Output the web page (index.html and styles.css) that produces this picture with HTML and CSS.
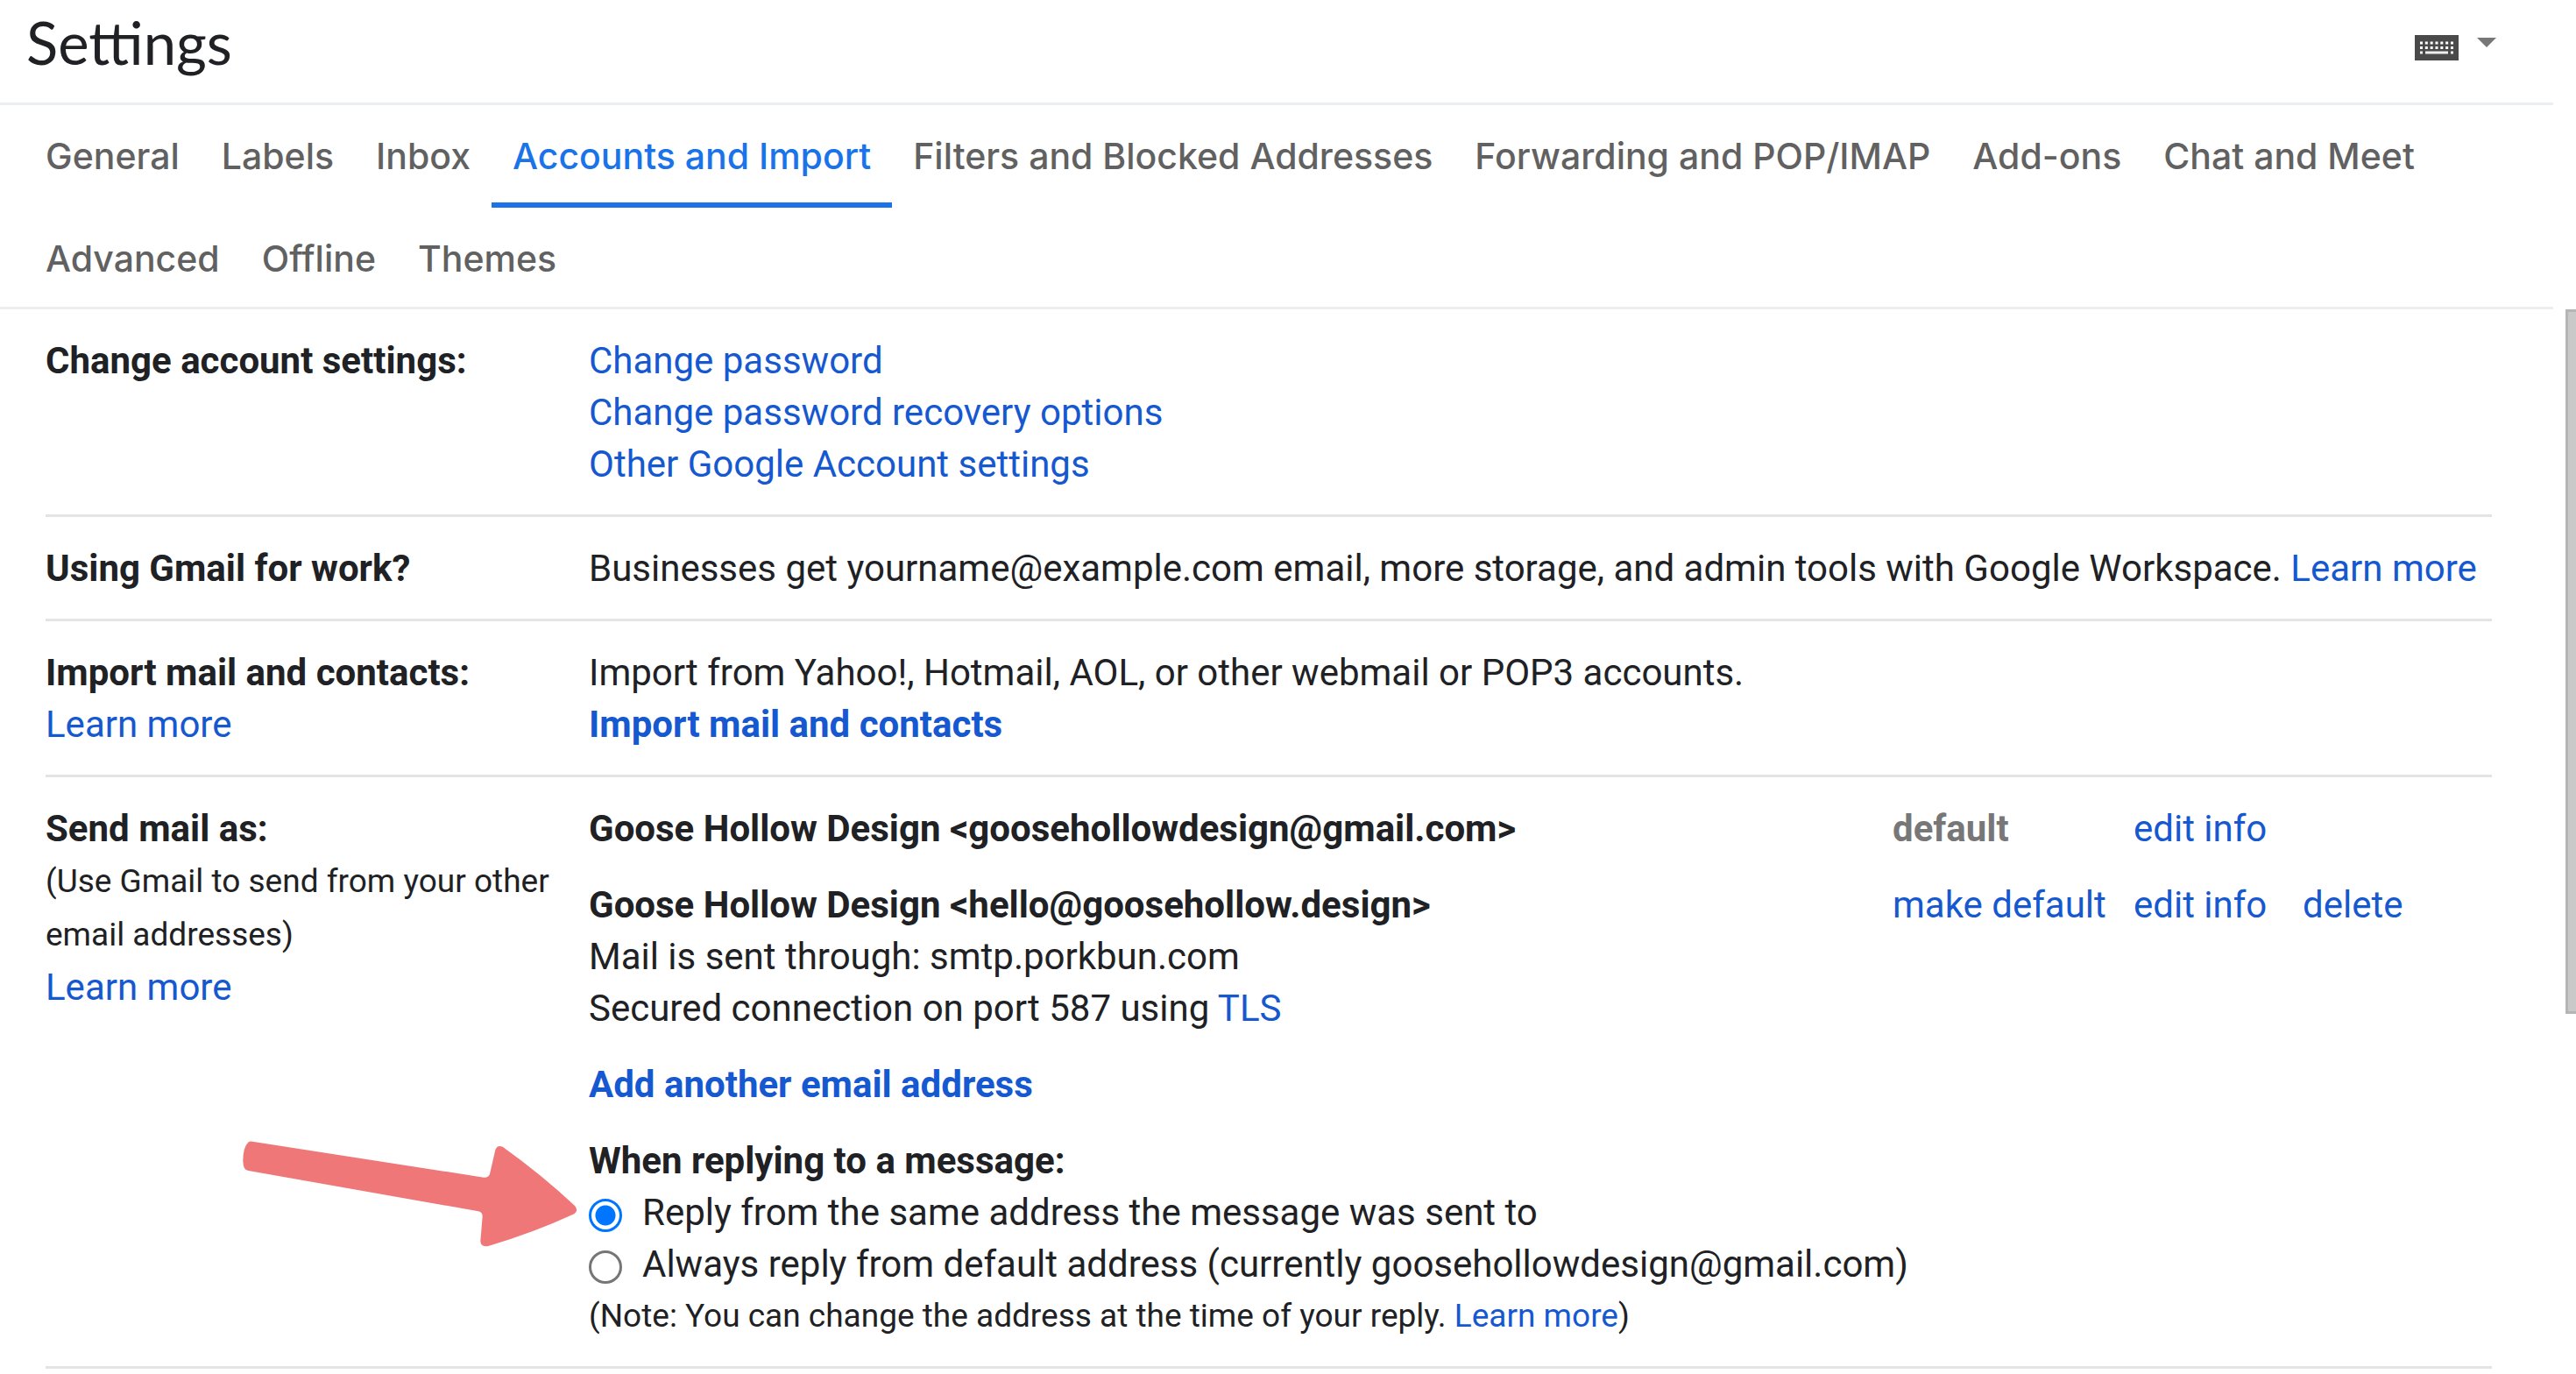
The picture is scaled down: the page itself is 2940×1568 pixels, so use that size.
FILE: index.html
```html
<!DOCTYPE html>
<html lang="en">
<head>
    <meta charset="UTF-8">
    <meta name="viewport" content="width=device-width, initial-scale=1.0">
    <title>Settings</title>
    <link rel="stylesheet" href="styles.css">
</head>
<body>

    <header class="topbar">
        <h1>Settings</h1>
        <button class="input-tools" type="button" aria-label="Input tools">
            <svg width="50" height="29" viewBox="0 0 50 29">
                <rect width="50" height="29" fill="#4a4a4a"/>
                <path d="M6 9h38M6 14.5h38" stroke="#fff" stroke-width="3" stroke-dasharray="3 2.83"/>
                <path d="M6 20h3M12 20h26M41 20h3" stroke="#eee" stroke-width="3"/>
            </svg>
            <svg class="caret" width="22" height="11" viewBox="0 0 22 11">
                <path d="M0 0h22L11 11z" fill="#777"/>
            </svg>
        </button>
    </header>

    <nav class="tabs">
        <a href="#">General</a>
        <a href="#">Labels</a>
        <a href="#">Inbox</a>
        <a href="#" class="active">Accounts and Import</a>
        <a href="#">Filters and Blocked Addresses</a>
        <a href="#">Forwarding and POP/IMAP</a>
        <a href="#">Add-ons</a>
        <a href="#">Chat and Meet</a>
        <a href="#">Advanced</a>
        <a href="#">Offline</a>
        <a href="#">Themes</a>
    </nav>

    <div class="scroll-area">
        <main class="settings">

            <section class="row">
                <h2>Change account settings:</h2>
                <div>
                    <p><a href="#">Change password</a></p>
                    <p><a href="#">Change password recovery options</a></p>
                    <p><a href="#">Other Google Account settings</a></p>
                </div>
            </section>

            <section class="row">
                <h2>Using Gmail for work?</h2>
                <p>Businesses get yourname@example.com email, more storage, and admin tools with Google Workspace. <a href="#">Learn more</a></p>
            </section>

            <section class="row">
                <div>
                    <h2>Import mail and contacts:</h2>
                    <p><a href="#">Learn more</a></p>
                </div>
                <div>
                    <p>Import from Yahoo!, Hotmail, AOL, or other webmail or POP3 accounts.</p>
                    <p><a href="#" class="strong">Import mail and contacts</a></p>
                </div>
            </section>

            <section class="row">
                <div>
                    <h2>Send mail as:</h2>
                    <p class="hint">(Use Gmail to send from your other email addresses)</p>
                    <p><a href="#">Learn more</a></p>
                </div>
                <div class="groups">
                    <div class="address">
                        <p class="strong">Goose Hollow Design &lt;goosehollowdesign@gmail.com&gt;</p>
                        <span class="default">default</span>
                        <a href="#">edit info</a>
                    </div>
                    <div class="address">
                        <div>
                            <p class="strong">Goose Hollow Design &lt;hello@goosehollow.design&gt;</p>
                            <p>Mail is sent through: smtp.porkbun.com</p>
                            <p>Secured connection on port 587 using <a href="#">TLS</a></p>
                        </div>
                        <a href="#">make default</a>
                        <a href="#">edit info</a>
                        <a href="#">delete</a>
                    </div>
                    <p><a href="#" class="strong">Add another email address</a></p>
                    <div class="reply">
                        <svg class="arrow" width="382" height="121" viewBox="111 99 1146 363">
                            <path fill="#ef7778" d="M144 101L936 224Q952 226 957 212L976 130Q982 112 1001 119Q1138 217 1248 321Q1262 337 1246 349Q1108 413 952 459Q926 464 925 442L932 358Q932 343 918 340L131 201Q113 201 112 168Q112 121 131 103Q137 99 144 101z"/>
                        </svg>
                        <p class="strong">When replying to a message:</p>
                        <label><input type="radio" name="reply" checked>Reply from the same address the message was sent to</label>
                        <label><input type="radio" name="reply">Always reply from default address (currently goosehollowdesign@gmail.com)</label>
                        <p class="note">(Note: You can change the address at the time of your reply. <a href="#">Learn more</a>)</p>
                    </div>
                </div>
            </section>

        </main>
        <div class="scrollbar"><div class="thumb"></div></div>
    </div>

</body>
</html>
```

FILE: styles.css
```css
* {
    box-sizing: border-box;
}

body {
    margin: 0;
    background-color: #fff;
    color: #202124;
    font-family: Roboto, "Liberation Sans", sans-serif;
    font-size: 42px;
    line-height: 59px;
    overflow: hidden;
}

h1, h2, p {
    margin: 0;
}

h2 {
    font-size: 42px;
    font-weight: 700;
}

a {
    color: #1558d0;
    text-decoration: none;
}

.strong {
    font-weight: 700;
}

.topbar {
    display: flex;
    justify-content: space-between;
    align-items: flex-start;
    height: 120px;
    margin-right: 26px;
    padding: 8px 65px 0 30px;
    border-bottom: 3px solid #eceff1;
}

.topbar h1 {
    font-family: Lato, sans-serif;
    font-size: 67px;
    font-weight: 400;
    line-height: 80px;
}

.input-tools {
    display: flex;
    align-items: flex-start;
    gap: 21px;
    margin-top: 32px;
    padding: 0;
    border: 0;
    background: none;
}

.caret {
    margin-top: 3px;
}

.tabs {
    display: flex;
    flex-wrap: wrap;
    height: 233px;
    margin-right: 26px;
    padding: 0 28px;
    border-bottom: 3px solid #eee;
}

.tabs a {
    height: 117px;
    padding: 0 24px;
    color: #616161;
    font-family: "Google Sans", Inter, sans-serif;
    font-size: 41px;
    font-weight: 500;
    line-height: 117px;
}

.tabs .active {
    color: #1a73e8;
    border-bottom: 6px solid #1a73e8;
}

.scroll-area {
    display: flex;
}

.settings {
    flex: 1;
    padding: 0 84px 0 52px;
}

.row {
    display: grid;
    grid-template-columns: 620px 1fr;
    padding: 29px 0 28px;
    border-bottom: 3px solid #e4e4e4;
}

.hint,
.note {
    font-size: 37px;
}

.hint {
    padding-right: 40px;
    line-height: 61px;
}

.groups {
    display: flex;
    flex-direction: column;
    gap: 28px;
}

.address {
    display: grid;
    grid-template-columns: 1fr 275px 193px 216px;
}

.default {
    color: #777;
    font-weight: 700;
}

.reply {
    position: relative;
}

.reply label {
    display: flex;
    gap: 23px;
}

.reply input {
    appearance: none;
    width: 38px;
    height: 38px;
    margin: 14px 0 0;
    border: 3px solid #767676;
    border-radius: 50%;
}

.reply input:checked {
    border-color: #0075ff;
    background: radial-gradient(circle, #0075ff 11px, #fff 12px);
}

/* pointer drawn over the left column */
.arrow {
    position: absolute;
    top: 7px;
    right: calc(100% + 13px);
}

.scrollbar {
    width: 12px;
}

.thumb {
    height: 804px;
    border: 3px solid #b5b5b5;
    border-right: 0;
    background-color: #c9c9c9;
}
```
